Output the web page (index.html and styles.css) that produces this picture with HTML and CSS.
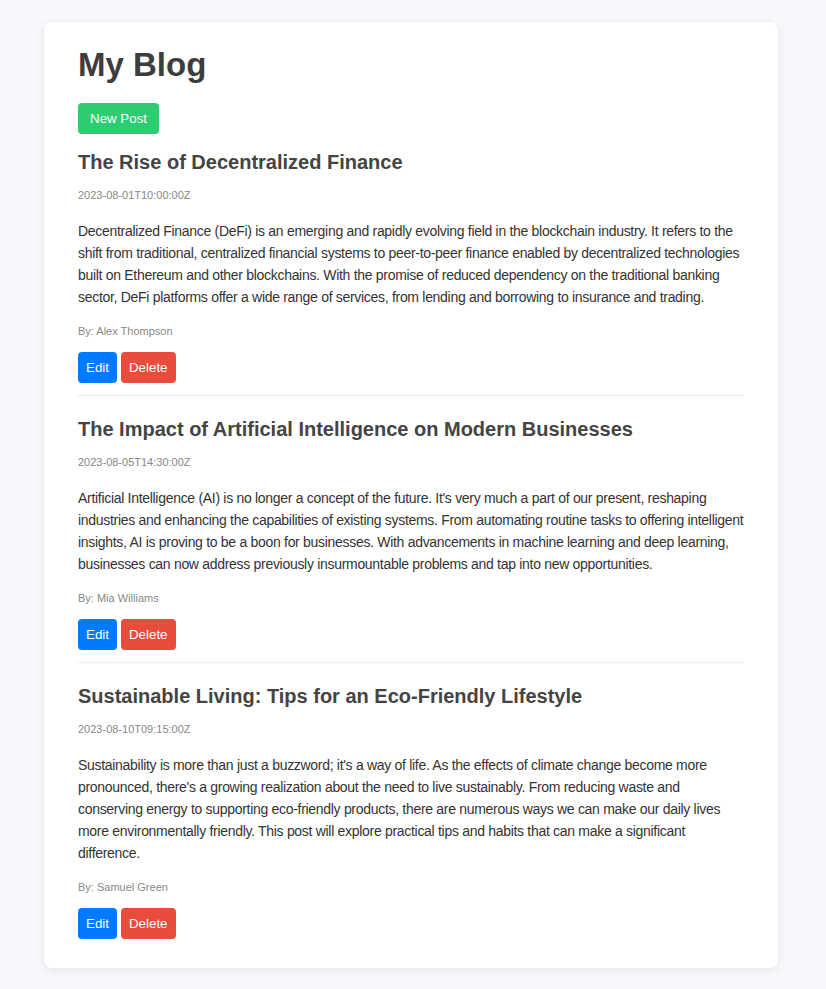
FILE: index.html
```html
<!DOCTYPE html>
<html lang="en">
<head>
<meta charset="utf-8">
<title>My Blog</title>
<link rel="stylesheet" href="styles.css">
</head>
<body>
<div class="container">
  <h1 class="title">My Blog</h1>
  <button class="btn btn-new">New Post</button>

  <article class="post">
    <h2 class="post-title">The Rise of Decentralized Finance</h2>
    <p class="post-date">2023-08-01T10:00:00Z</p>
    <p class="post-body">Decentralized Finance (DeFi) is an emerging and rapidly evolving field in the blockchain industry. It refers to the shift from traditional, centralized financial systems to peer-to-peer finance enabled by decentralized technologies built on Ethereum and other blockchains. With the promise of reduced dependency on the traditional banking sector, DeFi platforms offer a wide range of services, from lending and borrowing to insurance and trading.</p>
    <p class="post-author">By: Alex Thompson</p>
    <div class="actions">
      <button class="btn btn-edit">Edit</button>
      <button class="btn btn-delete">Delete</button>
    </div>
  </article>

  <article class="post">
    <h2 class="post-title">The Impact of Artificial Intelligence on Modern Businesses</h2>
    <p class="post-date">2023-08-05T14:30:00Z</p>
    <p class="post-body">Artificial Intelligence (AI) is no longer a concept of the future. It's very much a part of our present, reshaping industries and enhancing the capabilities of existing systems. From automating routine tasks to offering intelligent insights, AI is proving to be a boon for businesses. With advancements in machine learning and deep learning, businesses can now address previously insurmountable problems and tap into new opportunities.</p>
    <p class="post-author">By: Mia Williams</p>
    <div class="actions">
      <button class="btn btn-edit">Edit</button>
      <button class="btn btn-delete">Delete</button>
    </div>
  </article>

  <article class="post">
    <h2 class="post-title">Sustainable Living: Tips for an Eco-Friendly Lifestyle</h2>
    <p class="post-date">2023-08-10T09:15:00Z</p>
    <p class="post-body">Sustainability is more than just a buzzword; it's a way of life. As the effects of climate change become more pronounced, there's a growing realization about the need to live sustainably. From reducing waste and conserving energy to supporting eco-friendly products, there are numerous ways we can make our daily lives more environmentally friendly. This post will explore practical tips and habits that can make a significant difference.</p>
    <p class="post-author">By: Samuel Green</p>
    <div class="actions">
      <button class="btn btn-edit">Edit</button>
      <button class="btn btn-delete">Delete</button>
    </div>
  </article>
</div>
</body>
</html>
```

FILE: styles.css
```css
html, body {
  margin: 0;
  padding: 0;
}

body {
  background: #f7f8fc;
  font-family: "Liberation Sans", Arial, Helvetica, sans-serif;
  color: #333;
  padding: 22px 48px 22px 44px;
}

.container {
  background: #fff;
  border-radius: 8px;
  box-shadow: 0 2px 10px rgba(0, 0, 0, 0.08);
  padding: 24px 34px 17px;
}

.title {
  margin: 0 0 20px;
  font-size: 33px;
  line-height: 37px;
  font-weight: bold;
  color: #3d3d3d;
}

.btn {
  font-family: "Liberation Sans", Arial, Helvetica, sans-serif;
  font-size: 13.333px;
  line-height: 15px;
  color: #fff;
  border: none;
  border-radius: 4px;
  padding: 8px;
  cursor: pointer;
  display: inline-block;
}

.btn-new {
  background: #2ecc71;
  padding: 8px 12px;
}

.btn-edit {
  background: #007bff;
}

.btn-delete {
  background: #e74c3c;
}

.post {
  padding-bottom: 12px;
  border-bottom: 1px solid #eee;
}

.post + .post {
  padding-top: 5px;
}

.post:last-child {
  border-bottom: none;
}

.post-title {
  margin: 17px 0 15px;
  font-size: 20px;
  line-height: 23px;
  font-weight: bold;
  color: #444;
}

.post-date {
  margin: 0 0 18px;
  font-size: 11px;
  line-height: 13px;
  color: #888;
}

.post-body {
  margin: 0 0 17px;
  font-size: 14px;
  line-height: 22px;
  letter-spacing: -0.3px;
  color: #333;
}

.post-author {
  margin: 0 0 14px;
  font-size: 11px;
  line-height: 13px;
  color: #888;
}

.actions {
  display: flex;
  gap: 4px;
}
```
